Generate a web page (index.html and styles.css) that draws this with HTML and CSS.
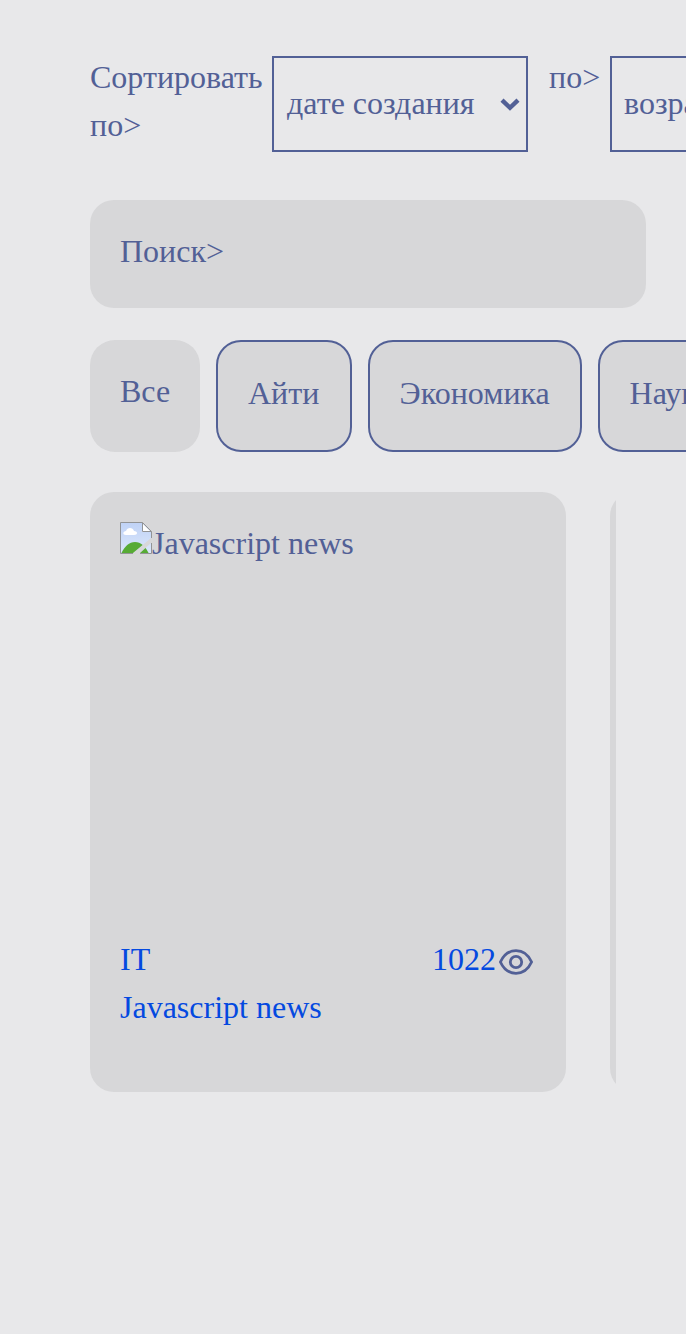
FILE: index.html
```html
<!DOCTYPE html>
<html lang="ru">
<head>
<meta charset="utf-8">
<title>Javascript news</title>
<link rel="stylesheet" href="styles.css">
</head>
<body>
<main class="page">
  <div class="sort">
    <span class="sort-label">Сортировать по&gt;</span>
    <div class="select select-field"><span>дате создания</span>
      <svg class="chevron" viewBox="0 0 20 14"><path d="M2 3.200 10 10.800l8-7.600" fill="none" stroke="currentColor" stroke-width="4.400"/></svg>
    </div>
    <span class="sort-order">по&gt;</span>
    <div class="select select-order"><span>возрастанию</span></div>
  </div>
  <div class="search">Поиск&gt;</div>
  <div class="tabs">
    <div class="tab tab-active">Все</div>
    <div class="tab tab-it">Айти</div>
    <div class="tab tab-economy">Экономика</div>
    <div class="tab">Наука</div>
  </div>
  <div class="cards">
    <article class="card">
      <div class="picture">
        <svg class="broken" viewBox="0 0 32 32">
          <defs>
            <linearGradient id="sky" x2="0" y2="1"><stop stop-color="#bfd2f6"/><stop offset="1" stop-color="#dce8fb"/></linearGradient>
            <clipPath id="sheet"><path d="M1 1h21l9 9v6L13 31H1zM31 21v10H20z"/></clipPath>
          </defs>
          <g clip-path="url(#sheet)">
            <path d="M0 0h32v32H0z" fill="url(#sky)"/>
            <path d="M1 32c3-7 8-12 14-12s11 5 14 12z" fill="#57ab35"/>
            <path d="M6 13c-4 0-3-4 0-4 1-4 7-4 8 0 4 0 4 4 0 4z" fill="#fff"/>
            <path d="M22 1v9h9z" fill="#fff"/>
          </g>
          <path d="M31.500 16V9.500L22.500.500H.500v31H13M22.500.500v9h9M31.500 21v10.500H20" fill="none" stroke="#929496"/>
        </svg><span class="alt">Javascript news</span>
      </div>
      <div class="meta">
        <span>IT</span>
        <span class="views">1022<svg class="eye" viewBox="0 0 40 32"><path d="M4.400 16C8 8.200 13.500 4.700 20 4.700S32 8.200 35.600 16C32 23.800 26.500 27.300 20 27.300S8 23.800 4.400 16z"/><circle cx="20" cy="16" r="5.700"/></svg></span>
      </div>
      <div>Javascript news</div>
    </article>
    <article class="card"></article>
  </div>
</main>
</body>
</html>
```
FILE: styles.css
```css
* { box-sizing: border-box; }
body {
  margin: 0;
  min-height: 1334px;
  overflow: hidden;
  background: #e8e8ea;
  color: #526096;
  font: 32px/48px "Liberation Serif", "Times New Roman", serif;
}
.page { padding: 56px 40px 0 90px; }
.sort { display: flex; height: 96px; white-space: nowrap; }
.sort-label { width: 182px; flex: none; margin-top: -3px; white-space: normal; }
.select {
  display: flex;
  align-items: center;
  justify-content: space-between;
  flex: none;
  height: 96px;
  border: 2px solid #526096;
  padding: 0 6px 2px 12px;
}
.select-field { width: 256px; padding-left: 13px; }
.select-order { width: 256px; }
.chevron { width: 20px; height: 14px; margin-top: 2px; }
.sort-order { flex: none; width: 61px; margin: -3px 0 0 21px; }
.search {
  height: 108px;
  margin-top: 48px;
  padding: 27px 30px;
  border-radius: 24px;
  background: #d7d7d9;
}
.tabs { display: flex; gap: 16px; margin-top: 32px; }
.tab {
  flex: none;
  height: 112px;
  padding: 27px 30px;
  border: 2px solid #526096;
  border-radius: 25px;
  background: #d7d7d9;
}
.tab-active { width: 110px; border: 0; }
.tab-it { width: 135.6px; }
.tab-economy { width: 214px; }
.cards {
  display: flex;
  gap: 44px;
  width: 526px;
  margin-top: 40px;
  overflow: hidden;
}
.card {
  flex: none;
  width: 476px;
  height: 600px;
  padding: 30px;
  border-radius: 24px;
  background: #d7d7d9;
  color: #0449e0;
}
.picture { display: flex; width: 416px; height: 413px; color: #526096; }
.alt { margin-top: -3px; }
.broken { width: 32px; height: 32px; }
.meta { display: flex; justify-content: space-between; }
.views { display: flex; align-items: center; }
.eye {
  width: 40px;
  height: 32px;
  margin-top: 6px;
  fill: none;
  stroke: #526096;
  stroke-width: 2.8;
}
```
